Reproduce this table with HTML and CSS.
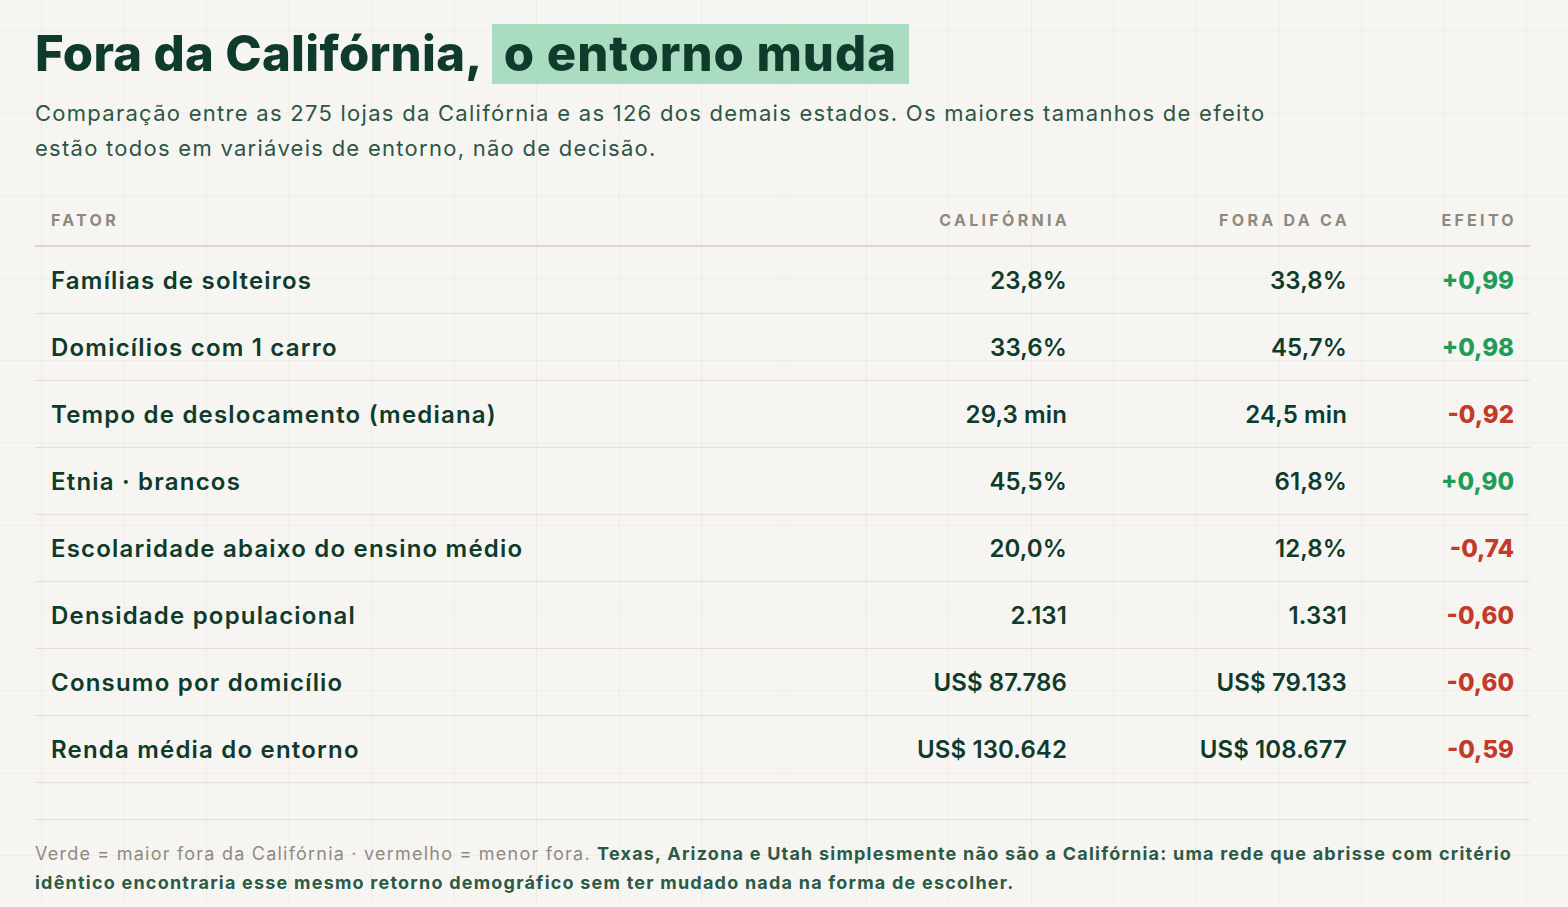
FILE: index.html
```html
<!DOCTYPE html>
<html lang="pt-BR">
<head>
<meta charset="utf-8">
<title>Fora da Califórnia, o entorno muda</title>
<link rel="stylesheet" href="styles.css">
</head>
<body>
<main class="page">
  <h1 class="title">Fora da Califórnia, <span class="mark">o entorno muda</span></h1>
  <p class="lead">Comparação entre as 275 lojas da Califórnia e as 126 dos demais estados. Os maiores tamanhos de efeito<br>estão todos em variáveis de entorno, não de decisão.</p>

  <table class="grid-table">
    <thead>
      <tr>
        <th class="c-factor">Fator</th>
        <th class="c-num">Califórnia</th>
        <th class="c-num">Fora da CA</th>
        <th class="c-eff">Efeito</th>
      </tr>
    </thead>
    <tbody>
      <tr><td class="c-factor">Famílias de solteiros</td><td class="c-num">23,8%</td><td class="c-num">33,8%</td><td class="c-eff pos">+0,99</td></tr>
      <tr><td class="c-factor">Domicílios com 1 carro</td><td class="c-num">33,6%</td><td class="c-num">45,7%</td><td class="c-eff pos">+0,98</td></tr>
      <tr><td class="c-factor">Tempo de deslocamento (mediana)</td><td class="c-num">29,3 min</td><td class="c-num">24,5 min</td><td class="c-eff neg">-0,92</td></tr>
      <tr><td class="c-factor">Etnia · brancos</td><td class="c-num">45,5%</td><td class="c-num">61,8%</td><td class="c-eff pos">+0,90</td></tr>
      <tr><td class="c-factor">Escolaridade abaixo do ensino médio</td><td class="c-num">20,0%</td><td class="c-num">12,8%</td><td class="c-eff neg">-0,74</td></tr>
      <tr><td class="c-factor">Densidade populacional</td><td class="c-num">2.131</td><td class="c-num">1.331</td><td class="c-eff neg">-0,60</td></tr>
      <tr><td class="c-factor">Consumo por domicílio</td><td class="c-num">US$ 87.786</td><td class="c-num">US$ 79.133</td><td class="c-eff neg">-0,60</td></tr>
      <tr><td class="c-factor">Renda média do entorno</td><td class="c-num">US$ 130.642</td><td class="c-num">US$ 108.677</td><td class="c-eff neg">-0,59</td></tr>
    </tbody>
  </table>

  <p class="note">Verde = maior fora da Califórnia · vermelho = menor fora. <strong>Texas, Arizona e Utah simplesmente não são a Califórnia: uma rede que abrisse com critério<br>idêntico encontraria esse mesmo retorno demográfico sem ter mudado nada na forma de escolher.</strong></p>
</main>
</body>
</html>
```

FILE: styles.css
```css
html, body {
  margin: 0;
  padding: 0;
}

body {
  background-color: #f7f5f1;
  background-image:
    linear-gradient(to right, rgba(60, 50, 30, 0.045) 1px, transparent 1px),
    linear-gradient(to bottom, rgba(60, 50, 30, 0.045) 1px, transparent 1px);
  background-size: 82.5px 82.5px;
  background-position: 41px 30px;
  font-family: "Inter", "Liberation Sans", sans-serif;
  color: #0e3b2b;
  min-height: 907px;
}

.page {
  padding: 24px 38px 0 35px;
}

.title {
  margin: 0;
  font-size: 49px;
  font-weight: 800;
  line-height: 60px;
  letter-spacing: 0.3px;
  color: #0e3b2b;
}

.mark {
  display: inline-block;
  background: #a9dcc1;
  padding: 0 12px 0 12px;
  letter-spacing: 0.95px;
}

.lead {
  margin: 12px 0 0;
  font-size: 22px;
  line-height: 35px;
  letter-spacing: 1.27px;
  color: #2d5646;
}

.grid-table {
  width: 100%;
  margin-top: 29px;
  border-collapse: collapse;
}

.grid-table th {
  height: 50px;
  padding: 0 16px;
  font-size: 16px;
  font-weight: 700;
  letter-spacing: 3.3px;
  text-transform: uppercase;
  color: #8c897f;
  border-bottom: 2px solid #ddd7ce;
  vertical-align: middle;
}

.grid-table th.c-num,
.grid-table th.c-eff {
  padding-right: 13px;
}

.grid-table td {
  height: 66px;
  padding: 0 16px;
  font-size: 24px;
  font-weight: 600;
  color: #0e3b2b;
  border-bottom: 1px solid #e4e0d9;
  vertical-align: middle;
}

.grid-table td.c-factor { letter-spacing: 1.2px; }
.grid-table td.c-num { letter-spacing: 0.1px; }

.c-factor { text-align: left; }
.c-num { text-align: right; width: 248px; }
.c-eff { text-align: right; width: 135px; }

.grid-table td.c-eff { font-weight: 800; letter-spacing: 0; }
.grid-table td.pos { color: #1f9b5a; }
.grid-table td.neg { color: #c23a2a; }

.note {
  margin: 36px 0 0;
  padding-top: 19px;
  border-top: 1px solid #e4e0d9;
  font-size: 18px;
  line-height: 29px;
  letter-spacing: 1.22px;
  color: #8f8b82;
}

.note strong {
  font-weight: 700;
  color: #2b5a47;
}
```
